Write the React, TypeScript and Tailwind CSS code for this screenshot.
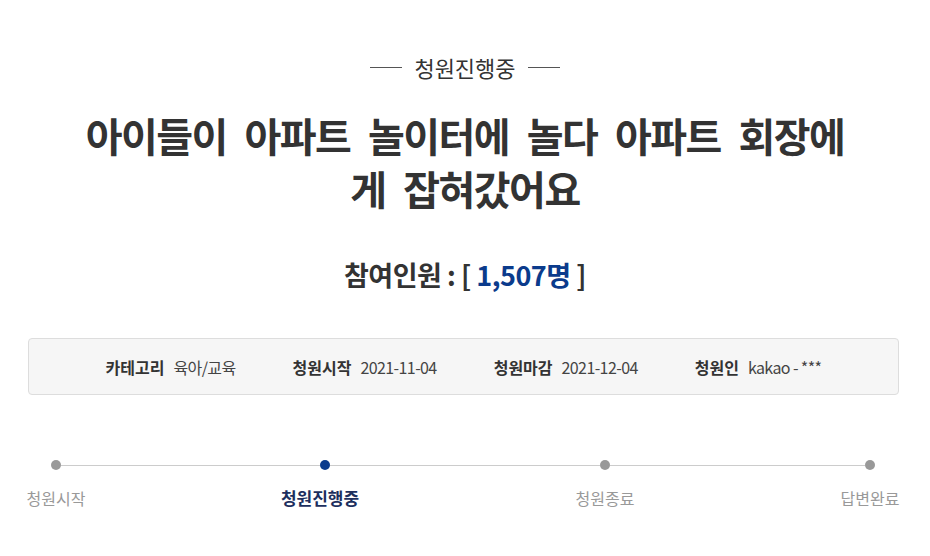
import React from 'react';

const info = [
  { label: '카테고리', value: '육아/교육' },
  { label: '청원시작', value: '2021-11-04' },
  { label: '청원마감', value: '2021-12-04' },
  { label: '청원인', value: 'kakao - ***' },
];

const App: React.FC = () => {
  return (
    <div className="w-[930px] h-[556px] bg-white text-[#333] font-['Noto_Sans_CJK_KR','Noto_Sans',sans-serif]">
      {/* status label */}
      <div className="flex items-center justify-center pt-[51px]">
        <span className="w-[32px] h-px bg-[#555]" />
        <span className="mx-[12px] text-[22px] leading-[32px] text-[#333]">청원진행중</span>
        <span className="w-[32px] h-px bg-[#555]" />
      </div>

      {/* title */}
      <h1 className="mx-auto mt-[26px] w-[792px] text-center text-[40px] leading-[53px] font-bold tracking-[-1.5px] [word-spacing:10px] text-[#333]">
        아이들이 아파트 놀이터에 놀다 아파트 회장에게 잡혀갔어요
      </h1>

      {/* count */}
      <div className="mt-[41px] text-center text-[27px] leading-[38px] font-bold tracking-[-0.5px] text-[#333]">
        참여인원 : [ <span className="text-[#0b3b8c]">1,507명</span> ]
      </div>

      {/* info box */}
      <div className="ml-[28px] w-[871px] mt-[44px] h-[57px] flex items-center justify-center gap-[57px] bg-[#f6f6f6] border border-[#ddd] rounded-[4px] text-[16px]">
        {info.map((it) => (
          <div key={it.label} className="flex items-center gap-[9px]">
            <span className="font-bold text-[#333]">{it.label}</span>
            <span className="text-[#444] tracking-[-0.6px]">{it.value}</span>
          </div>
        ))}
      </div>

      {/* progress */}
      <div className="mt-[65px] ml-[51px] flex items-center">
        <span className="w-[10px] h-[10px] rounded-full bg-[#999]" />
        <span className="w-[259px] h-px bg-[#ccc]" />
        <span className="w-[10px] h-[10px] rounded-full bg-[#0b3b8c]" />
        <span className="w-[270px] h-px bg-[#ccc]" />
        <span className="w-[10px] h-[10px] rounded-full bg-[#999]" />
        <span className="w-[255px] h-px bg-[#ccc]" />
        <span className="w-[10px] h-[10px] rounded-full bg-[#999]" />
      </div>
      <div className="mt-[16px] ml-[6px] flex items-center text-[16px] leading-[24px] text-[#999]">
        <span className="w-[100px] text-center">청원시작</span>
        <span className="w-[164px]" />
        <span className="w-[100px] text-center text-[17px] font-bold text-[#1d2f5e]">청원진행중</span>
        <span className="w-[185px]" />
        <span className="w-[100px] text-center">청원종료</span>
        <span className="w-[165px]" />
        <span className="w-[100px] text-center">답변완료</span>
      </div>
    </div>
  );
};

export default App;
